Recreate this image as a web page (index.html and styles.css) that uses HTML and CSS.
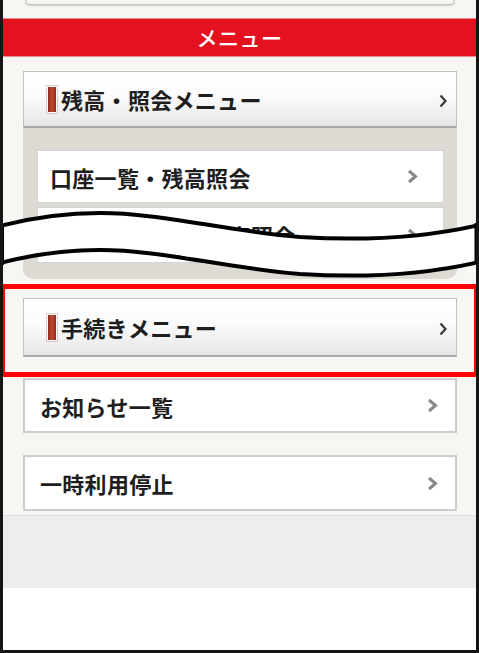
FILE: index.html
```html
<!DOCTYPE html>
<html lang="ja">
<head>
<meta charset="utf-8">
<link rel="stylesheet" href="styles.css">
</head>
<body>
<div class="frame">
  <div class="main">
    <div class="topcap"></div>
    <div class="redbar">メニュー</div>
    <div class="section s1">
      <div class="hbtn">
        <span class="marker"></span>
        <span class="htext">残高・照会メニュー</span>
        <svg class="hchev" width="8" height="14" viewBox="0 0 8 14"><polyline points="1.5,1.5 6.5,7 1.5,12.5" fill="none" stroke="#3a3a3a" stroke-width="2.2"/></svg>
      </div>
      <div class="panel">
        <div class="pitem">
          <span class="itext">口座一覧・残高照会</span>
          <svg class="ichev" width="11" height="15" viewBox="0 0 11 15"><polyline points="2,2 8.5,7.5 2,13" fill="none" stroke="#888" stroke-width="3"/></svg>
        </div>
        <div class="pitem p2">
          <span class="itext">外貨預金口座・残高照会</span>
          <svg class="ichev" width="11" height="15" viewBox="0 0 11 15"><polyline points="2,2 8.5,7.5 2,13" fill="none" stroke="#888" stroke-width="3"/></svg>
        </div>
      </div>
    </div>
    <div class="section s2">
      <div class="hbtn tall">
        <span class="marker"></span>
        <span class="htext">手続きメニュー</span>
        <svg class="hchev" width="8" height="14" viewBox="0 0 8 14"><polyline points="1.5,1.5 6.5,7 1.5,12.5" fill="none" stroke="#3a3a3a" stroke-width="2.2"/></svg>
      </div>
    </div>
    <div class="section s3">
      <div class="oitem">
        <span class="itext">お知らせ一覧</span>
        <svg class="ochev" width="11" height="15" viewBox="0 0 11 15"><polyline points="2,2 8.5,7.5 2,13" fill="none" stroke="#888" stroke-width="3"/></svg>
      </div>
      <div class="oitem o2">
        <span class="itext">一時利用停止</span>
        <svg class="ochev" width="11" height="15" viewBox="0 0 11 15"><polyline points="2,2 8.5,7.5 2,13" fill="none" stroke="#888" stroke-width="3"/></svg>
      </div>
    </div>
  </div>
  <div class="footer"></div>
  <div class="rest"></div>

  <svg class="wave" width="479" height="80" viewBox="0 205 479 80">
    <path d="M0,226 C35,217 65,213 100,213 C160,213 220,230 300,237 C380,242 440,234 479,225 L479,262 C440,271 380,279 300,274 C220,267 160,250 100,250 C65,250 35,254 0,263 Z" fill="#fff"/>
    <path d="M0,226 C35,217 65,213 100,213 C160,213 220,230 300,237 C380,242 440,234 479,225" fill="none" stroke="#000" stroke-width="4"/>
    <path d="M0,263 C35,254 65,250 100,250 C160,250 220,267 300,274 C380,279 440,271 479,262" fill="none" stroke="#000" stroke-width="4"/>
    <line x1="2" y1="224" x2="2" y2="265" stroke="#000" stroke-width="4"/>
    <line x1="476.5" y1="223" x2="476.5" y2="264" stroke="#000" stroke-width="4"/>
  </svg>
  <div class="highlight"></div>
</div>
</body>
</html>
```

FILE: styles.css
```css
html, body {
  margin: 0;
  padding: 0;
  background: #fff;
}

body {
  font-family: "Noto Sans CJK JP", "Noto Sans", sans-serif;
  color: #1e1e1e;
}

.frame {
  position: relative;
  width: 479px;
  height: 653px;
  box-sizing: border-box;
  border-left: 3px solid #151515;
  border-right: 3px solid #151515;
  border-bottom: 3px solid #151515;
  background: #fff;
  display: flex;
  flex-direction: column;
  overflow: hidden;
}

.main {
  background: #f7f6f2;
  height: 515px;
  display: flex;
  flex-direction: column;
}

.topcap {
  height: 4px;
  margin: 0 21px 0 22px;
  background: #f4f4f2;
  border: 1px solid #c4c4c4;
  border-top: none;
  border-radius: 0 0 8px 8px;
  box-shadow: 0 1px 2px rgba(0, 0, 0, 0.18);
}

.redbar {
  margin-top: 13px;
  height: 39px;
  background: #e5111f;
  border-top: 1px solid #f08a90;
  border-bottom: 1px solid #f08a90;
  box-sizing: border-box;
  color: #fff;
  font-size: 21px;
  font-weight: 500;
  line-height: 37px;
  text-align: center;
  letter-spacing: 0.5px;
}

.section {
  padding: 0 19px 0 20px;
  display: flex;
  flex-direction: column;
}

.s1 { margin-top: 14px; }
.s2 { margin-top: 19px; }
.s3 { margin-top: 21px; }

.hbtn {
  height: 57px;
  box-sizing: border-box;
  display: flex;
  align-items: center;
  padding: 0 9px 0 23px;
  border: 1px solid #c2c2c2;
  border-bottom: 2px solid #a9a9a9;
  background: linear-gradient(to bottom, #ffffff 0%, #fbfbfb 45%, #e6e6e6 100%);
}

.hbtn.tall {
  height: 59px;
}

.marker {
  width: 8px;
  height: 25px;
  margin-top: 1px;
  background: linear-gradient(to right, #8e2a1a 0%, #c04a31 50%, #8e2a1a 100%);
  border: 1px solid #fff;
  box-shadow: 0 0 0 1px rgba(160, 60, 40, 0.25);
  flex: none;
}

.htext {
  margin-left: 4px;
  font-size: 22px;
  font-weight: bold;
  line-height: 1;
  flex: 1;
  letter-spacing: 0.3px;
}

.hchev {
  flex: none;
  margin-top: 4px;
}

.panel {
  background: #dcdad3;
  padding: 22px 13px 16px 14px;
  border-radius: 0 0 10px 10px;
  display: flex;
  flex-direction: column;
  gap: 4px;
}

.pitem {
  height: 53px;
  box-sizing: border-box;
  background: #fff;
  border: 1px solid #d4d4d4;
  display: flex;
  align-items: center;
  padding: 0 25px 0 12px;
}

.pitem.p2 {
  height: 56px;
}

.itext {
  flex: 1;
  font-size: 22px;
  font-weight: bold;
  line-height: 1;
  letter-spacing: 0.3px;
}

.ichev, .ochev {
  flex: none;
}

.oitem {
  height: 55px;
  box-sizing: border-box;
  background: #fff;
  border: 2px solid #cdcdcd;
  display: flex;
  align-items: center;
  padding: 0 17px 0 15px;
}

.oitem.o2 {
  height: 56px;
  margin-top: 22px;
}

.footer {
  height: 73px;
  box-sizing: border-box;
  background: #ededed;
  border-top: 1px solid #dcdcdc;
}

.rest {
  flex: 1;
  background: #fff;
}

.wave {
  position: absolute;
  left: -3px;
  top: 205px;
}

.highlight {
  position: absolute;
  left: -3px;
  top: 284px;
  width: 479px;
  height: 93px;
  box-sizing: border-box;
  border: 5px solid #ff0000;
}
```
